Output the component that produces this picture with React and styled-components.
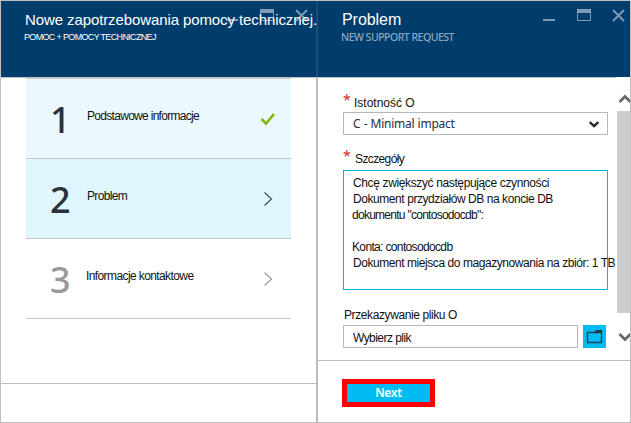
import React from 'react';
import styled, { createGlobalStyle } from 'styled-components';

const GlobalStyle = createGlobalStyle`
  * { box-sizing: border-box; }
  body { margin: 0; background: #fff; overflow: hidden; }
`;

const Window = styled.div`
  display: grid;
  grid-template-columns: 315px 2px 312px;
  width: 631px;
  height: 423px;
  border: 1px solid #bfbfbf;
  font: 12px/16px "Liberation Sans", Arial, sans-serif;
  color: #111;
`;

const Blade = styled.section`
  display: flex;
  flex-direction: column;
  min-width: 0;
  position: relative;
`;

const Divider = styled.div`
  background: linear-gradient(#1a4f7c 76px, #bcbcbc 76px);
`;

const Header = styled.header`
  display: flex;
  justify-content: space-between;
  height: 76px;
  padding-left: ${(p) => p.$indent}px;
  background: #003c6c;
  color: #fff;
`;

const Titles = styled.div`
  padding-top: 8px;
  white-space: nowrap;
  position: relative;
  z-index: 1;
`;

const Title = styled.h1`
  margin: 0;
  font-size: ${(p) => p.$size}px;
  font-weight: 400;
  line-height: 22px;
  letter-spacing: ${(p) => p.$track}px;
`;

const Caption = styled.div`
  margin-left: -1px;
  font-size: 9px;
  line-height: 12px;
  letter-spacing: -0.66px;
`;

const MutedCaption = styled(Caption)`
  font-family: "Noto Sans", sans-serif;
  font-size: 10.5px;
  font-weight: 500;
  letter-spacing: -0.5px;
  color: #8ca8c1;
`;

const Controls = styled.svg`
  position: absolute;
  top: 7px;
  right: ${(p) => p.$right}px;
  width: 84px;
  height: 16px;
  fill: none;
  stroke: #809db5;
`;

const HeaderRule = styled.div`
  height: 1px;
  background: #bfbfbf;
  margin-right: ${(p) => p.$end || 0}px;
`;

const Steps = styled.ol`
  list-style: none;
  margin: 0 25px;
  padding: 0;
  flex: 1;
  border-top: 1px solid #ccc;
  height: 0;
`;

const Step = styled.li`
  display: grid;
  grid-template-columns: 61px 1fr 30px;
  height: 80px;
  border-bottom: 1px solid #c8c8c8;
  background: ${(p) => p.$fill};
`;

const StepNumber = styled.span`
  padding: 20px 0 0 24px;
  font: 500 36px/42px "Noto Sans", sans-serif;
  letter-spacing: -1px;
  color: ${(p) => (p.$muted ? '#999' : '#2b313b')};
`;

const StepLabel = styled.span`
  padding-top: 29px;
  margin-left: ${(p) => p.$shift || 0}px;
  letter-spacing: ${(p) => p.$track}px;
  white-space: nowrap;
`;

const StepIcon = styled.svg`
  width: 16px;
  height: 16px;
  margin-top: ${(p) => p.$top}px;
  justify-self: start;
  margin-left: -1px;
  fill: none;
  stroke: ${(p) => p.$color};
  stroke-width: ${(p) => p.$weight};
`;

const Footer = styled.footer`
  height: ${(p) => p.$height}px;
  flex: none;
  border-top: 1px solid #bcbcbc;
  padding: 18px 0 0 24px;
`;

const FormArea = styled.div`
  display: grid;
  grid-template-columns: 1fr 13px;
  height: 282px;
`;

const Form = styled.div`
  padding-left: 25px;
`;

const Label = styled.label`
  display: flex;
  height: 16px;
  margin-top: ${(p) => p.$top}px;
  padding-left: ${(p) => p.$left || 0}px;
  letter-spacing: ${(p) => p.$track}px;
  white-space: nowrap;
`;

const Required = styled.span`
  width: ${(p) => p.$width}px;
  height: 16px;
  font: 14px/10px "Noto Sans", sans-serif;
  letter-spacing: 0;
  color: #e01b24;
`;

const Select = styled.div`
  display: flex;
  justify-content: space-between;
  width: 265px;
  height: 23px;
  margin-top: 1px;
  padding: 0 8px 0 9px;
  border: 1px solid #b8b8b8;
  font: 12px/21px "Noto Sans", sans-serif;
  letter-spacing: -0.27px;
  word-spacing: 0.5px;
  color: #24303c;
`;

const SelectArrow = styled.svg`
  width: 10px;
  height: 8px;
  margin-top: 7px;
  fill: none;
  stroke: #1f2733;
  stroke-width: 2.4;
`;

const Details = styled.div`
  width: 265px;
  height: 120px;
  margin-top: 3px;
  padding: 4px 0 0 8px;
  border: 1px solid #00b7ea;
  white-space: nowrap;
`;

const Line = styled.div`
  height: 16px;
  margin-left: ${(p) => p.$shift || 0}px;
  letter-spacing: ${(p) => p.$track}px;
`;

const Upload = styled.div`
  display: flex;
  gap: 5px;
  margin-top: 2px;
`;

const FileField = styled.div`
  width: 235px;
  height: 23px;
  padding-left: 9px;
  border: 1px solid #b8b8b8;
  line-height: 24px;
  letter-spacing: -0.55px;
`;

const BrowseButton = styled.button`
  width: 23px;
  height: 23px;
  padding: 4px 3px;
  border: 0;
  background: #00bcf2;
  svg { display: block; }
`;

const Scrollbar = styled.div`
  display: flex;
  flex-direction: column;
  padding-top: 15px;
  overflow: hidden;
`;

const ScrollArrow = styled.svg`
  width: 14px;
  height: 12px;
  margin-left: 1px;
  flex: none;
  fill: none;
  stroke: #686868;
  stroke-width: 2.8;
`;

const Thumb = styled.div`
  height: 202px;
  margin: 6px 0 18px;
  background: #cdcdcd;
`;

const NextButton = styled.button`
  display: block;
  width: 93px;
  height: 28px;
  padding: 0;
  border: 5px solid #f00;
  background: #00bcf2;
  color: #fff;
  font: 600 12px/18px "Noto Sans", sans-serif;
  letter-spacing: -0.3px;
`;

const WindowControls = ({ right }) => (
  <Controls $right={right} viewBox="0 0 84 16">
    <path d="M0 12H12" strokeWidth="2" />
    <path d="M34.5 3V12.5H47.5V3" />
    <path d="M34 3H48" strokeWidth="4" />
    <path d="M70 2L81 13M81 2L70 13" strokeWidth="1.8" />
  </Controls>
);

const Chevron = ({ color }) => (
  <StepIcon $color={color} $weight={1.1} $top={32} viewBox="0 0 16 16">
    <path d="M4.5 1.5L11.5 8L4.5 14.5" />
  </StepIcon>
);

export default function App() {
  return (
    <>
      <GlobalStyle />
      <Window>
        <Blade>
          <Header $indent={24}>
            <Titles>
              <Title $size={15} $track={-0.1}>Nowe zapotrzebowania pomocy technicznej.</Title>
              <Caption>POMOC + POMOCY TECHNICZNEJ</Caption>
            </Titles>
            <WindowControls right={6} />
          </Header>
          <HeaderRule />
          <Steps>
            <Step $fill="#ebf9ff">
              <StepNumber>1</StepNumber>
              <StepLabel $track={-0.7}>Podstawowe informacje</StepLabel>
              <StepIcon $color="#7fba00" $weight={2.6} $top={32} viewBox="0 0 16 16">
                <path d="M1.5 8L6 12.5L14 3" />
              </StepIcon>
            </Step>
            <Step $fill="#e0f6fe">
              <StepNumber>2</StepNumber>
              <StepLabel $track={-0.67}>Problem</StepLabel>
              <Chevron color="#39444f" />
            </Step>
            <Step $fill="#fff">
              <StepNumber $muted>3</StepNumber>
              <StepLabel $shift={-1} $track={-0.6}>Informacje kontaktowe</StepLabel>
              <Chevron color="#999" />
            </Step>
          </Steps>
          <Footer $height={39} />
        </Blade>
        <Divider />
        <Blade>
          <Header $indent={24}>
            <Titles>
              <Title $size={16} $track={-0.05}>Problem</Title>
              <MutedCaption>NEW SUPPORT REQUEST</MutedCaption>
            </Titles>
            <WindowControls right={3} />
          </Header>
          <HeaderRule $end={14} />
          <FormArea>
            <Form>
              <Label $top={17} $track={0}>
                <Required $width={11}>*</Required>Istotność O
              </Label>
              <Select>
                C - Minimal impact
                <SelectArrow viewBox="0 0 10 8"><path d="M0.8 2L5 6L9.2 2" /></SelectArrow>
              </Select>
              <Label $top={16} $track={-0.62}>
                <Required $width={12}>*</Required>Szczegóły
              </Label>
              <Details>
                <Line $shift={1} $track={-0.37}>Chcę zwiększyć następujące czynności</Line>
                <Line $shift={1} $track={-0.43}>Dokument przydziałów DB na koncie DB</Line>
                <Line $track={-0.73}>dokumentu "contosodocdb":</Line>
                <Line />
                <Line $track={-0.65}>Konta: contosodocdb</Line>
                <Line $shift={1} $track={-0.44}>Dokument miejsca do magazynowania na zbiór: 1 TB</Line>
              </Details>
              <Label $top={17} $left={1} $track={-0.4}>Przekazywanie pliku O</Label>
              <Upload>
                <FileField>Wybierz plik</FileField>
                <BrowseButton aria-label="Wybierz plik">
                  <svg width="17" height="15" viewBox="0 0 17 15">
                    <path d="M1.5 3.5H15.5V13.5H1.5Z" fill="none" stroke="#1f4258" strokeWidth="1.4" />
                    <path d="M8 4L10 1H16V4Z" fill="#2b3540" />
                  </svg>
                </BrowseButton>
              </Upload>
            </Form>
            <Scrollbar>
              <ScrollArrow viewBox="0 0 14 12"><path d="M1.5 9L7 3.5L12.5 9" /></ScrollArrow>
              <Thumb />
              <ScrollArrow viewBox="0 0 14 12"><path d="M1.5 3L7 8.5L12.5 3" /></ScrollArrow>
            </Scrollbar>
          </FormArea>
          <Footer $height={62}>
            <NextButton>Next</NextButton>
          </Footer>
        </Blade>
      </Window>
    </>
  );
}
